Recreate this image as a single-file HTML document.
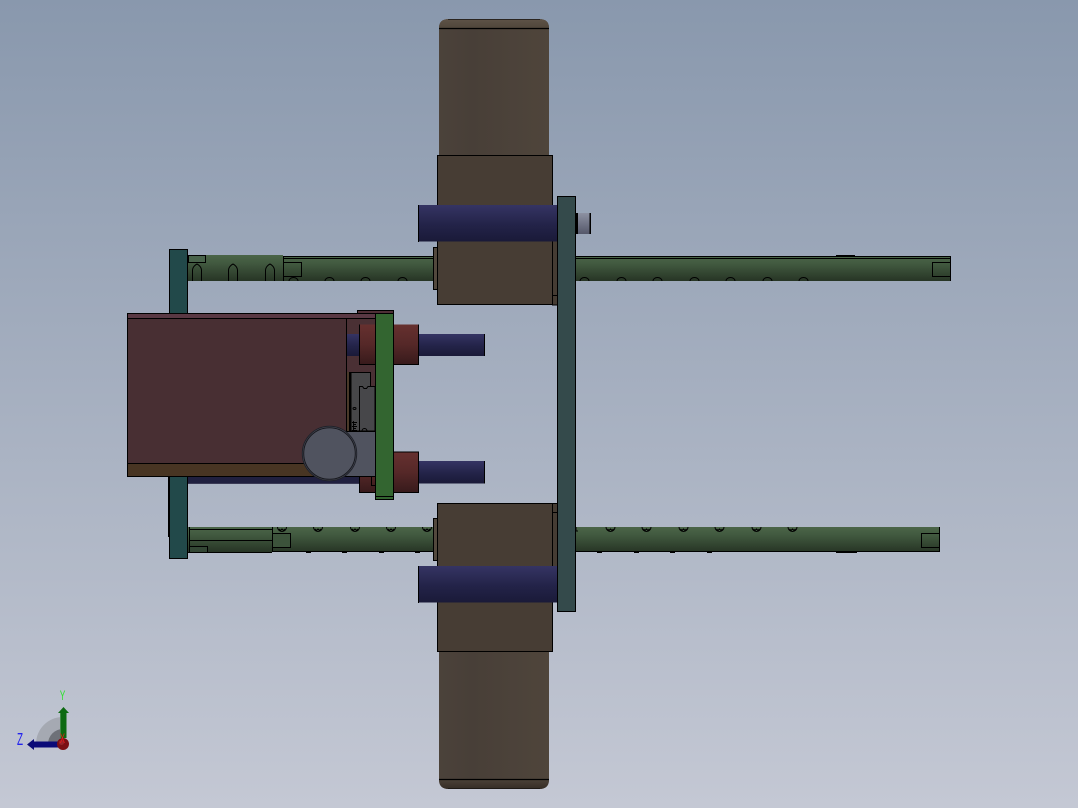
<!DOCTYPE html>
<html lang="en"><head><meta charset="utf-8"><title>CAD view</title>
<style>
html,body{margin:0;padding:0;width:1078px;height:808px;overflow:hidden;background:#a6afbf}
svg{display:block}
text{font-family:"Liberation Sans",sans-serif}
</style></head><body>
<svg xmlns="http://www.w3.org/2000/svg" width="1078" height="808" viewBox="0 0 1078 808">
<defs>
<linearGradient id="bg" x1="0" y1="0" x2="0" y2="1"><stop offset="0" stop-color="#8998ad"/><stop offset="1" stop-color="#c4c8d4"/></linearGradient>
<linearGradient id="rail" x1="0" y1="0" x2="0" y2="1"><stop offset="0" stop-color="#4b6548"/><stop offset="0.3" stop-color="#425a40"/><stop offset="1" stop-color="#273525"/></linearGradient>
<linearGradient id="axle" x1="0" y1="0" x2="0" y2="1"><stop offset="0" stop-color="#353463"/><stop offset="0.55" stop-color="#232348"/><stop offset="1" stop-color="#1a1a38"/></linearGradient>
<linearGradient id="red" x1="0" y1="0" x2="0" y2="1"><stop offset="0" stop-color="#66302f"/><stop offset="0.5" stop-color="#552828"/><stop offset="1" stop-color="#371a1b"/></linearGradient>
<linearGradient id="pin" x1="0" y1="0" x2="0" y2="1"><stop offset="0" stop-color="#8d91a2"/><stop offset="1" stop-color="#55586a"/></linearGradient>
<linearGradient id="wheel" x1="0" y1="0" x2="1" y2="0"><stop offset="0" stop-color="#4b423a"/><stop offset="0.3" stop-color="#483f38"/><stop offset="1" stop-color="#4f453b"/></linearGradient>
<linearGradient id="cap1" x1="0" y1="0" x2="0" y2="1"><stop offset="0" stop-color="#5e5347"/><stop offset="1" stop-color="#50463b"/></linearGradient>
<linearGradient id="cap2" x1="0" y1="0" x2="0" y2="1"><stop offset="0" stop-color="#4c4238"/><stop offset="1" stop-color="#352d26"/></linearGradient>
</defs>
<rect width="1078" height="808" fill="url(#bg)"/>

<!-- upper right rail -->
<rect x="576" y="256" width="375" height="25" fill="url(#rail)"/>
<path d="M576 256.500H951M576 258.500H951M950.500 256V281" stroke="#000" stroke-width="1" fill="none" shape-rendering="crispEdges"/>
<rect x="932.500" y="262.500" width="18" height="14" fill="none" stroke="#000"/>
<rect x="836" y="255" width="19" height="2" fill="#000"/>
<g fill="none" stroke="#000" stroke-width="1"><path d="M580 281a4.500 3.500 0 0 1 9 0M617 281a4.500 3.500 0 0 1 9 0M653 281a4.500 3.500 0 0 1 9 0M690 281a4.500 3.500 0 0 1 9 0M726 281a4.500 3.500 0 0 1 9 0M763 281a4.500 3.500 0 0 1 9 0M799 281a4.500 3.500 0 0 1 9 0"/></g>

<!-- upper left rail -->
<rect x="188" y="255" width="95" height="26" fill="url(#rail)"/>
<rect x="283" y="256" width="150" height="25" fill="url(#rail)"/>
<path d="M283 256.500H433M283 258.500H433M283.500 256V281" stroke="#000" fill="none" shape-rendering="crispEdges"/>
<rect x="283.500" y="262.500" width="18" height="14" fill="none" stroke="#000"/>
<rect x="188.500" y="255.500" width="17" height="7" fill="#48624a" stroke="#000"/>
<g fill="none" stroke="#000" stroke-width="1"><path d="M192.500 281V270Q193 266 197 264Q201 266 201.500 270V281M228.500 281V270Q229 266 233 264Q237 266 237.500 270V281M265.500 281V270Q266 266 270 264Q274 266 274.500 270V281"/><path d="M289 281a4.500 3.500 0 0 1 9 0M325 281a4.500 3.500 0 0 1 9 0M361 281a4.500 3.500 0 0 1 9 0M398 281a4.500 3.500 0 0 1 9 0"/></g>

<!-- lower right rail -->
<rect x="576" y="527" width="364" height="25" fill="url(#rail)"/>
<path d="M576 551.500H940M939.500 527V552" stroke="#000" fill="none" shape-rendering="crispEdges"/>
<rect x="921.500" y="533.500" width="18" height="14" fill="none" stroke="#000"/>
<rect x="836" y="551" width="21" height="2" fill="#000"/>
<g fill="#000"><rect x="597" y="552" width="5" height="1"/><rect x="634" y="552" width="5" height="1"/><rect x="670" y="552" width="5" height="1"/><rect x="707" y="552" width="5" height="1"/></g>
<g fill="none" stroke="#000" stroke-width="1"><path d="M606 527a4.500 4.500 0 0 0 9 0M642 527a4.500 4.500 0 0 0 9 0M679 527a4.500 4.500 0 0 0 9 0M715 527a4.500 4.500 0 0 0 9 0M752 527a4.500 4.500 0 0 0 9 0M788 527a4.500 4.500 0 0 0 9 0M576 527v4h2"/>
<path d="M607.500 529l1.500 1.500 1.500-1.500 1.500 1.500 1.500-1.500M643.500 529l1.500 1.500 1.500-1.500 1.500 1.500 1.500-1.500M680.500 529l1.500 1.500 1.500-1.500 1.500 1.500 1.500-1.500M716.500 529l1.500 1.500 1.500-1.500 1.500 1.500 1.500-1.500M753.500 529l1.500 1.500 1.500-1.500 1.500 1.500 1.500-1.500M789.500 529l1.500 1.500 1.500-1.500 1.500 1.500 1.500-1.500"/></g>

<!-- lower left rail -->
<rect x="188" y="527" width="245" height="25" fill="url(#rail)"/>
<path d="M272 551.500H433M188 552.500H272M272.500 527V552" stroke="#000" fill="none" shape-rendering="crispEdges"/>
<path d="M189.500 529.500H272.500M189.500 540.500H272.500M189.500 527V552" stroke="#000" fill="none" shape-rendering="crispEdges"/>
<rect x="189.500" y="546.500" width="18" height="6" fill="#334634" stroke="#000"/>
<rect x="272.500" y="533.500" width="18" height="14" fill="#3c533b" stroke="#000"/>
<g fill="#000"><rect x="233" y="552" width="5" height="1"/><rect x="306" y="552" width="5" height="1"/><rect x="342" y="552" width="5" height="1"/><rect x="379" y="552" width="5" height="1"/><rect x="415" y="552" width="5" height="1"/></g>
<g fill="none" stroke="#000" stroke-width="1"><path d="M277.500 527a4.500 4.500 0 0 0 9 0M313.500 527a4.500 4.500 0 0 0 9 0M350.500 527a4.500 4.500 0 0 0 9 0M386.500 527a4.500 4.500 0 0 0 9 0M422.500 527a4.500 4.500 0 0 0 9 0"/>
<path d="M279 529l1.500 1.500 1.500-1.500 1.500 1.500 1.500-1.500M315 529l1.500 1.500 1.500-1.500 1.500 1.500 1.500-1.500M352 529l1.500 1.500 1.500-1.500 1.500 1.500 1.500-1.500M388 529l1.500 1.500 1.500-1.500 1.500 1.500 1.500-1.500M424 529l1.500 1.500 1.500-1.500 1.500 1.500 1.500-1.500"/></g>

<!-- left teal plate -->
<rect x="168" y="477" width="1.500" height="60" fill="#000"/>
<rect x="169.500" y="249.500" width="18" height="309" fill="#22494a" stroke="#000"/>

<!-- top wheel -->
<path d="M439 155V28Q439 19 449 19H539Q549 19 549 28V155Z" fill="url(#wheel)"/>
<path d="M439 28Q439 19 449 19H539Q549 19 549 28Z" fill="url(#cap1)"/>
<path d="M439 28.500H549" stroke="#000" stroke-width="1.300"/>
<path d="M448 19.500H540" stroke="#2a2520" stroke-width="1"/>
<!-- top collar, spacer, hub -->
<rect x="433.500" y="247.500" width="4" height="42" fill="#52483d" stroke="#000"/>
<rect x="552.500" y="241" width="5" height="64" fill="#453c33" stroke="#000"/>
<path d="M553 295.500H557" stroke="#000"/>
<rect x="437.500" y="155.500" width="115" height="149" fill="#473d34" stroke="#000"/>
<!-- top axle -->
<rect x="418" y="205" width="140" height="36.500" fill="url(#axle)"/>
<rect x="418" y="205" width="1" height="37" fill="#000"/>
<!-- pin -->
<rect x="576" y="213" width="15" height="21" fill="url(#pin)"/>
<rect x="576" y="213" width="2" height="21" fill="#000"/>
<rect x="589.500" y="213" width="1.500" height="21" fill="#000"/>

<!-- bottom wheel -->
<path d="M439 652V780Q439 789 449 789H539Q549 789 549 780V652Z" fill="url(#wheel)"/>
<path d="M439 779Q439 789 449 789H539Q549 789 549 779Z" fill="url(#cap2)"/>
<path d="M439 779.500H549" stroke="#000" stroke-width="1.300"/>
<path d="M448 788.500H540" stroke="#1f1a16" stroke-width="1"/>
<!-- bottom collar, spacer, hub -->
<rect x="433.500" y="518.500" width="4" height="42" fill="#52483d" stroke="#000"/>
<rect x="552.500" y="503.500" width="5" height="63" fill="#453c33" stroke="#000"/>
<path d="M553 512.500H557" stroke="#000"/>
<rect x="437.500" y="503.500" width="115" height="148" fill="#473d34" stroke="#000"/>
<!-- bottom axle -->
<rect x="418" y="566" width="140" height="36.500" fill="url(#axle)"/>
<rect x="418" y="566" width="1" height="37" fill="#000"/>

<!-- center plate -->
<rect x="557.500" y="196.500" width="18" height="415" fill="#344a4b" stroke="#000"/>

<!-- box group: shafts -->
<rect x="419" y="334" width="66" height="22" fill="url(#axle)"/>
<rect x="484" y="334" width="1" height="22" fill="#000"/>
<rect x="419" y="461" width="66" height="22.500" fill="url(#axle)"/>
<rect x="484" y="461" width="1" height="22.500" fill="#000"/>
<rect x="188" y="476" width="172" height="7" fill="#20203f"/>
<path d="M188 483.500H359" stroke="#3a3a55"/>

<!-- upper tab on plate -->
<rect x="357.500" y="310.500" width="36" height="4" fill="#4f2f36" stroke="#000"/>
<!-- back maroon area -->
<rect x="347" y="318" width="28" height="113" fill="#4a3034"/>
<rect x="347" y="334" width="13" height="22" fill="url(#axle)"/>
<!-- red cylinders -->
<rect x="359.500" y="324.500" width="59" height="40" fill="url(#red)"/>
<path d="M359.500 324.500V364.500H418.500V324.500" fill="none" stroke="#000"/>
<rect x="359.500" y="452.500" width="59" height="40" fill="url(#red)"/>
<path d="M359.500 476V492.500H418.500V452H394" fill="none" stroke="#000"/>
<path d="M371.500 476V485.500H375" fill="none" stroke="#000"/>

<!-- mechanism -->
<rect x="347" y="372" width="3" height="59" fill="#4a3a2a"/>
<rect x="349" y="372" width="2" height="59" fill="#000"/>
<rect x="351" y="372.500" width="19.500" height="58.500" fill="#474749" stroke="#000"/>
<path d="M359.500 431V386.500H362.500L364 388.500H366.500L368 386.500H375V431Z" fill="#47474a" stroke="#000"/>
<ellipse cx="354.500" cy="408.500" rx="1.500" ry="1" fill="none" stroke="#000"/>
<path d="M352 422.500H357M353 424.500H356M352 426.500H357M353 428.500H356M352 430.500H357M353.500 421V431" stroke="#000" stroke-width="0.900"/>
<path d="M362 431a2.500 2.500 0 0 1 5 0" fill="none" stroke="#000"/>

<!-- main box -->
<rect x="127.500" y="313.500" width="248" height="5" fill="#593843" stroke="#000"/>
<rect x="127.500" y="318.500" width="219" height="145" fill="#482f33" stroke="#000"/>
<rect x="127.500" y="463.500" width="230" height="13" fill="#483523" stroke="#000"/>

<!-- gray motor block -->
<rect x="340" y="431.500" width="35.500" height="45" fill="#50535f" stroke="#000"/>
<circle cx="329.500" cy="453.500" r="27.200" fill="#50535f" stroke="#20222a" stroke-width="1"/>
<circle cx="329.500" cy="453.500" r="25.800" fill="#50535f" stroke="#17181e" stroke-width="1"/>

<!-- green plate -->
<rect x="375.500" y="313.500" width="18" height="186" fill="#336530" stroke="#000"/>
<path d="M376 496.500H393" stroke="#000"/>

<!-- triad -->
<path d="M63 744H36A27 27 0 0 1 63 717Z" fill="#a5a9b2"/>
<path d="M63 744H48A15 15 0 0 1 63 729Z" fill="#6e7178"/>
<path d="M60.500 738V713H58L63.500 707L69 713H66.500V738Z" fill="#0d6a12"/>
<path d="M60.500 713V738" stroke="#3f8a45" stroke-width="1"/>
<path d="M34 741.500H58V747.500H34V750L27 744.500L34 739Z" fill="#0b0b78"/>
<circle cx="63" cy="744" r="6" fill="#7b0f14"/>
<circle cx="61.500" cy="742.500" r="2.500" fill="#96232a"/>
<text transform="translate(62.500 700) scale(.6 1)" font-size="14" text-anchor="middle" fill="#2fe22f">Y</text>
<text transform="translate(20 745) scale(.55 1)" font-size="18" text-anchor="middle" fill="#2222ee">Z</text>
<text transform="translate(62.500 743) scale(.55 1)" font-size="14" text-anchor="middle" fill="#f01818">X</text>
</svg>
</body></html>
